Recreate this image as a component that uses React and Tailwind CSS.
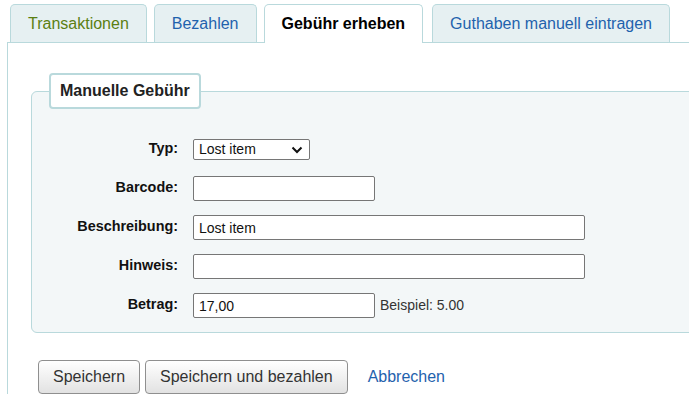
import React from 'react';

const tabs = [
  { label: 'Transaktionen', color: 'text-[#5b7f12]' },
  { label: 'Bezahlen', color: 'text-[#1f62ad]' },
  { label: 'Gebühr erheben', active: true },
  { label: 'Guthaben manuell eintragen', color: 'text-[#1f62ad]' },
];

const Row = ({ label, children }) => (
  <div className="flex items-start h-[39px]">
    <label className="w-[146px] text-right font-bold text-[14.4px] text-[#111] pt-[1px]">{label}</label>
    <div className="ml-[15px] flex items-center">{children}</div>
  </div>
);

const inputCls = 'h-[25px] border border-[#767676] rounded-[2px] bg-white px-[5px] text-[14px] text-[#111] outline-none';

const App = () => {
  return (
    <div className="w-[689px] h-[415px] overflow-hidden bg-white font-['Liberation_Sans',Arial,sans-serif]">
      {/* Tabs */}
      <div className="flex gap-[7px] pl-[10px] pt-[4px] relative z-10">
        {tabs.map(tab => (
          <div
            key={tab.label}
            className={
              tab.active
                ? 'h-[39px] px-[17px] flex items-center border border-b-0 border-[#b9d9dc] rounded-t-[5px] bg-white font-bold text-[16px] text-black mr-[2px]'
                : 'h-[38px] px-[17px] flex items-center border border-b-0 border-[#b9d9dc] rounded-t-[5px] bg-[#e6f0f2] text-[16px] ' + tab.color
            }
          >
            {tab.label}
          </div>
        ))}
      </div>

      {/* Panel */}
      <div className="ml-[7px] w-[720px] border-l border-t border-[#b9d9dc] -mt-px pt-[30px] pl-[23px]">
        <fieldset className="w-[700px] border border-[#b9d9dc] rounded-[6px] bg-[#f3f7f8] pb-[14px]">
          <legend className="ml-[17px] px-[9px] py-[4px] border-2 border-[#b9d9dc] rounded-[4px] bg-white font-bold text-[16px] text-[#222]">
            Manuelle Gebühr
          </legend>
          <div className="pt-[28px]">
            <Row label="Typ:">
              <div className="mt-[2px] w-[117px] h-[21px] border border-[#767676] rounded-[2px] bg-white flex items-center justify-between pl-[5px] pr-[6px] text-[14px] text-[#111]">
                <span>Lost item</span>
                <svg width="12" height="8" viewBox="0 0 12 8" fill="none">
                  <path d="M1.5 1.5 L6 6 L10.5 1.5" stroke="#111" strokeWidth="2" />
                </svg>
              </div>
            </Row>
            <Row label="Barcode:">
              <input className={inputCls + ' w-[182px]'} defaultValue="" />
            </Row>
            <Row label="Beschreibung:">
              <input className={inputCls + ' w-[392px]'} defaultValue="Lost item" />
            </Row>
            <Row label="Hinweis:">
              <input className={inputCls + ' w-[392px]'} defaultValue="" />
            </Row>
            <div className="flex items-start h-[25px]">
              <label className="w-[146px] text-right font-bold text-[14.4px] text-[#111] pt-[1px]">Betrag:</label>
              <div className="ml-[15px] flex items-center">
                <input className={inputCls + ' w-[182px]'} defaultValue="17,00" />
                <span className="ml-[5px] text-[14px] text-[#333]">Beispiel: 5.00</span>
              </div>
            </div>
          </div>
        </fieldset>

        <div className="flex items-center gap-[5px] mt-[27px] pl-[7px]">
          <button className="h-[34px] px-[14px] border border-[#8f8f8f] rounded-[4px] bg-gradient-to-b from-white to-[#e2e2e2] text-[16px] text-[#333]">
            Speichern
          </button>
          <button className="h-[34px] px-[14px] border border-[#8f8f8f] rounded-[4px] bg-gradient-to-b from-white to-[#e2e2e2] text-[16px] text-[#333]">
            Speichern und bezahlen
          </button>
          <a className="ml-[15px] text-[16px] text-[#1f62ad]">Abbrechen</a>
        </div>
      </div>
    </div>
  );
};

export default App;
